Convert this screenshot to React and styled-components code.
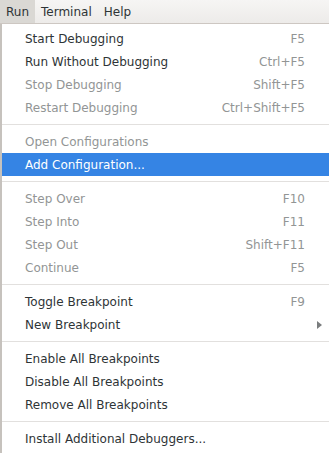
import styled, { createGlobalStyle } from "styled-components";

const GlobalStyle = createGlobalStyle`
  html, body {
    margin: 0;
    padding: 0;
    background: #ffffff;
  }
  body {
    font-family: "DejaVu Sans", "Liberation Sans", sans-serif;
    font-size: 12px;
    color: #2e3436;
  }
`;

const menuBar = ["Run", "Terminal", "Help"];

const items = [
  { label: "Start Debugging", key: "F5" },
  { label: "Run Without Debugging", key: "Ctrl+F5" },
  { label: "Stop Debugging", key: "Shift+F5", disabled: true },
  { label: "Restart Debugging", key: "Ctrl+Shift+F5", disabled: true },
  { sep: true },
  { label: "Open Configurations", disabled: true },
  { label: "Add Configuration...", active: true },
  { sep: true },
  { label: "Step Over", key: "F10", disabled: true },
  { label: "Step Into", key: "F11", disabled: true },
  { label: "Step Out", key: "Shift+F11", disabled: true },
  { label: "Continue", key: "F5", disabled: true },
  { sep: true },
  { label: "Toggle Breakpoint", key: "F9" },
  { label: "New Breakpoint", submenu: true },
  { sep: true },
  { label: "Enable All Breakpoints" },
  { label: "Disable All Breakpoints" },
  { label: "Remove All Breakpoints" },
  { sep: true },
  { label: "Install Additional Debuggers..." },
];

const App = () => {
  return (
    <Page>
      <GlobalStyle />
      <Bar>
        {menuBar.map((name, i) => (
          <BarItem key={name} open={i === 0}>
            {name}
          </BarItem>
        ))}
      </Bar>
      <Menu>
        {items.map((item, i) =>
          item.sep ? (
            <Separator key={i} />
          ) : (
            <Row key={i} disabled={item.disabled} active={item.active}>
              <Label>{item.label}</Label>
              {item.key && <Shortcut>{item.key}</Shortcut>}
              {item.submenu && (
                <Arrow viewBox="0 0 5 8">
                  <path d="M0 0 L5 4 L0 8 Z" fill="#7a7d7e" />
                </Arrow>
              )}
            </Row>
          )
        )}
      </Menu>
    </Page>
  );
};

export default App;

const Page = styled.div`
  width: 329px;
  height: 453px;
  overflow: hidden;
  display: flex;
  flex-direction: column;
`;

const Bar = styled.div`
  height: 23px;
  flex-shrink: 0;
  display: flex;
  align-items: stretch;
  background: linear-gradient(#f6f5f4, #edebe9);
  border-bottom: 1px solid #cdc7c2;
`;

const BarItem = styled.div`
  display: flex;
  align-items: center;
  padding: 0 6px;
  background: ${({ open }) => (open ? "#dad8d4" : "transparent")};
  color: #2e3436;
`;

const Menu = styled.ul`
  flex: 1;
  margin: 0;
  padding: 3px 0 0;
  list-style: none;
  background: #ffffff;
  border-left: 2px solid #c6c2bd;
`;

const Row = styled.li`
  height: 23px;
  display: flex;
  align-items: center;
  padding: 0 24px 0 23px;
  color: ${({ disabled, active }) =>
    active ? "#ffffff" : disabled ? "#929595" : "#2e3436"};
  background: ${({ active }) => (active ? "#3584e4" : "transparent")};
`;

const Label = styled.span`
  flex: 1;
  white-space: nowrap;
`;

const Shortcut = styled.span`
  color: #929595;
  white-space: nowrap;
`;

const Arrow = styled.svg`
  width: 5px;
  height: 8px;
  margin-right: -17px;
`;

const Separator = styled.li`
  height: 11px;
  display: flex;
  align-items: center;
  &::before {
    content: "";
    flex: 1;
    height: 1px;
    background: #e2e0de;
  }
`;
